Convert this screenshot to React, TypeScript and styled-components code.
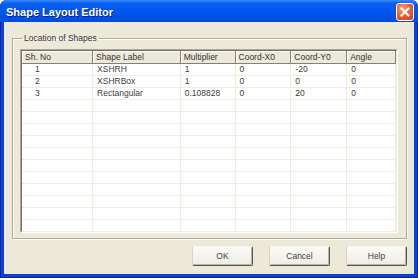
import styled, { createGlobalStyle } from 'styled-components';

const GlobalStyle = createGlobalStyle`
  html, body {
    margin: 0;
    padding: 0;
    background: #fff;
  }
  body {
    font-family: "Liberation Sans", Arial, sans-serif;
  }
`;

interface IColProps {
  w: number;
}

interface ICellProps {
  indent?: number;
}

const columns = [
  { title: 'Sh. No', w: 71 },
  { title: 'Shape Label', w: 88 },
  { title: 'Multiplier', w: 55 },
  { title: 'Coord-X0', w: 56 },
  { title: 'Coord-Y0', w: 56 },
  { title: 'Angle', w: 49 },
];

const rows = [
  ['1', 'XSHRH', '1', '0', '-20', '0'],
  ['2', 'XSHRBox', '1', '0', '0', '0'],
  ['3', 'Rectangular', '0.108828', '0', '20', '0'],
];

const EMPTY_ROWS = 12;

export const Window = styled.div`
  width: 418px;
  height: 278px;
  display: flex;
  flex-direction: column;
  background: #0842d6;
  border-radius: 7px 7px 0 0;
  box-shadow: inset 1px 0 0 #001ea0, inset -1px 0 0 #001ea0, inset 0 -1px 0 #001ea0;
  overflow: hidden;
`;

export const TitleBar = styled.div`
  height: 22px;
  flex: none;
  display: flex;
  align-items: center;
  justify-content: space-between;
  padding: 0 4px 0 6px;
  background: linear-gradient(#3d8dff 0, #0b60f0 3px, #0058ee 45%, #0052e6 80%, #004bd8 100%);
`;

export const TitleText = styled.span`
  color: #fff;
  font-family: "Liberation Sans", Arial, sans-serif;
  font-weight: bold;
  font-size: 11px;
  text-shadow: 1px 1px 0 #0a1e8c;
  padding-top: 2px;
`;

export const CloseButton = styled.div`
  width: 16px;
  height: 16px;
  border: 1px solid #fff;
  border-radius: 3px;
  background: radial-gradient(circle at 35% 30%, #f6a07e 0, #e65a2c 55%, #c8401a 100%);
  display: flex;
  align-items: center;
  justify-content: center;
  margin-top: 2px;
`;

export const Client = styled.div`
  flex: 1;
  min-height: 0;
  display: flex;
  flex-direction: column;
  margin: 0 4px 4px;
  background: #ece9d8;
  padding: 11px 7px 8px 8px;
`;

export const GroupBox = styled.fieldset`
  flex: 1;
  min-height: 0;
  margin: 0;
  padding: 5px 8px 5px 7px;
  border: 1px solid #aca899;
  box-shadow: 1px 1px 0 #fff, inset 1px 1px 0 #fff;
  display: flex;
  flex-direction: column;
  min-width: 0;
`;

export const GroupLegend = styled.legend`
  padding: 0 2px;
  margin-left: 2px;
  font-size: 8.5px;
  line-height: 11px;
  color: #333;
`;

export const ListFrame = styled.div`
  flex: 1;
  min-height: 0;
  border: 1px solid;
  border-color: #aca899 #fff #fff #aca899;
  overflow: hidden;
`;

export const ListInner = styled.div`
  height: 100%;
  border: 1px solid;
  border-color: #716f64 #f1efe2 #f1efe2 #716f64;
  background: #fff;
  overflow: hidden;
  box-sizing: border-box;
`;

export const Grid = styled.table`
  border-collapse: collapse;
  table-layout: fixed;
  font-size: 8.5px;
  color: #404040;
`;

export const Col = styled.col<IColProps>`
  width: ${(p) => p.w}px;
`;

export const HeadCell = styled.th`
  height: 12px;
  padding: 0 0 0 3px;
  text-align: left;
  font-weight: normal;
  color: #333;
  background: #ece9d8;
  border-right: 1px solid #808080;
  border-bottom: 1px solid #808080;
  box-shadow: inset 1px 1px 0 #fff;
  white-space: nowrap;
  overflow: hidden;
`;

export const Cell = styled.td<ICellProps>`
  height: 11px;
  padding: 0 0 0 ${(p) => p.indent ?? 4}px;
  border-right: 1px solid #efede2;
  border-bottom: 1px solid #efede2;
  white-space: nowrap;
  overflow: hidden;
  line-height: 11px;
`;

export const ButtonRow = styled.div`
  flex: none;
  display: flex;
  justify-content: flex-end;
  gap: 16px;
  margin-top: 7px;
`;

export const PushButton = styled.button`
  width: 61px;
  height: 20px;
  padding: 0;
  font-family: "Liberation Sans", Arial, sans-serif;
  font-size: 8.5px;
  color: #444;
  background: linear-gradient(#fbfaf6, #eeece3);
  border: 1px solid;
  border-color: #f4f3ee #555 #555 #d6d3c8;
  border-radius: 2px;
  box-shadow: inset -1px -1px 0 #b8b5a8;
`;

export default function App() {
  return (
    <>
      <GlobalStyle />
      <Window>
        <TitleBar>
          <TitleText>Shape Layout Editor</TitleText>
          <CloseButton>
            <svg width="10" height="10" viewBox="0 0 10 10">
              <path d="M1.5 1.5L8.5 8.5M8.5 1.5L1.5 8.5" stroke="#fff" strokeWidth="2" strokeLinecap="square" />
            </svg>
          </CloseButton>
        </TitleBar>
        <Client>
          <GroupBox>
            <GroupLegend>Location of Shapes</GroupLegend>
            <ListFrame>
              <ListInner>
                <Grid>
                  <colgroup>
                    {columns.map((c) => (
                      <Col key={c.title} w={c.w} />
                    ))}
                  </colgroup>
                  <thead>
                    <tr>
                      {columns.map((c) => (
                        <HeadCell key={c.title}>{c.title}</HeadCell>
                      ))}
                    </tr>
                  </thead>
                  <tbody>
                    {rows.map((r) => (
                      <tr key={r[0]}>
                        {r.map((v, i) => (
                          <Cell key={i} indent={i === 0 ? 13 : 4}>
                            {v}
                          </Cell>
                        ))}
                      </tr>
                    ))}
                    {Array.from({ length: EMPTY_ROWS }).map((_, k) => (
                      <tr key={'e' + k}>
                        {columns.map((c) => (
                          <Cell key={c.title} />
                        ))}
                      </tr>
                    ))}
                  </tbody>
                </Grid>
              </ListInner>
            </ListFrame>
          </GroupBox>
          <ButtonRow>
            <PushButton>OK</PushButton>
            <PushButton>Cancel</PushButton>
            <PushButton>Help</PushButton>
          </ButtonRow>
        </Client>
      </Window>
    </>
  );
}
